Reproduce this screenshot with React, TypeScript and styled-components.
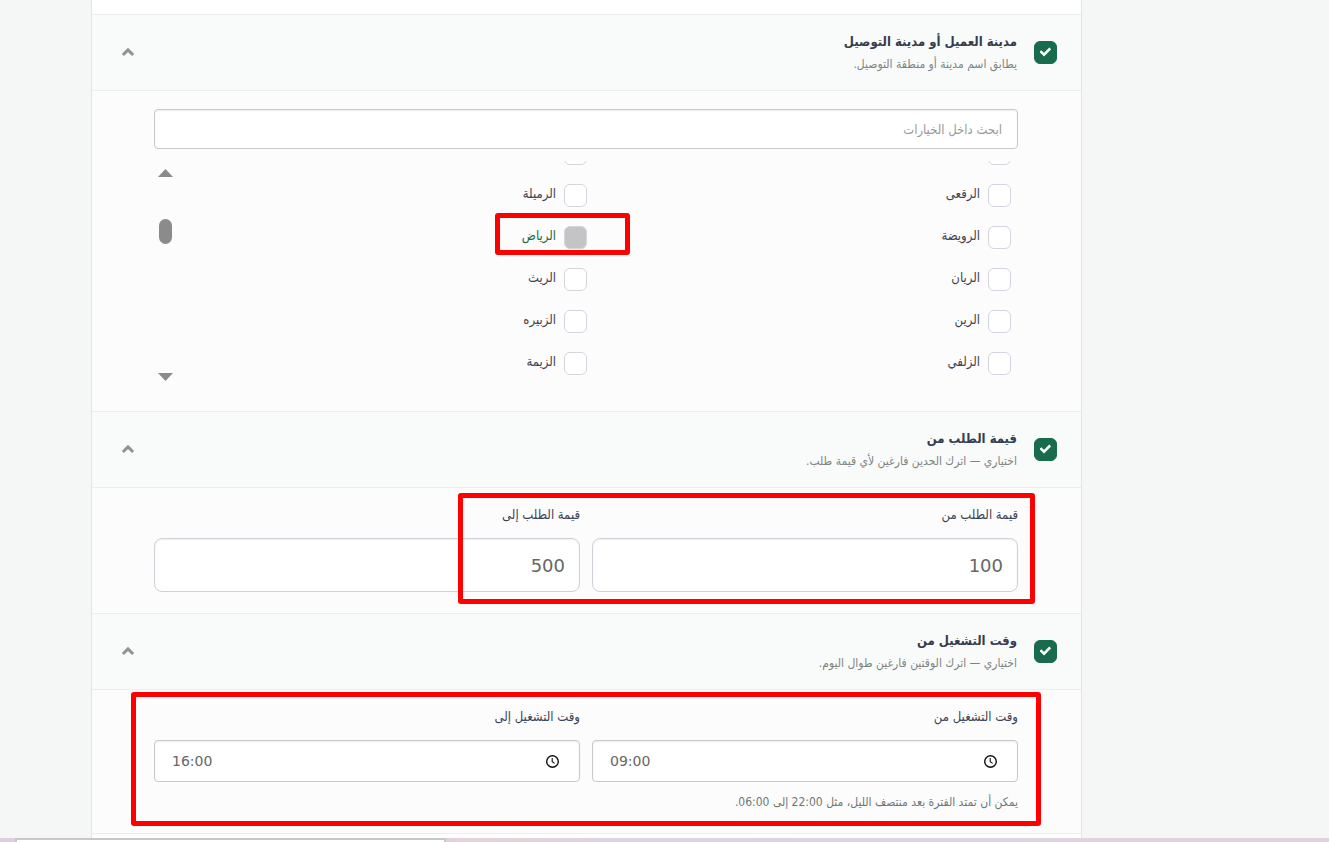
import React, { useState } from "react";
import styled, { createGlobalStyle } from "styled-components";

const GlobalStyle = createGlobalStyle`
  * { box-sizing: border-box; }
  body {
    margin: 0;
    background: #f4f7f6;
    color: #3d4455;
    font-family: "DejaVu Sans Condensed", "DejaVu Sans", sans-serif;
    font-size: 13px;
  }
  input, button { font-family: inherit; }
`;

const Screen = styled.div`
  display: flex;
  flex-direction: column;
  height: 100vh;
  overflow: hidden;
`;

const Page = styled.main`
  flex: 1;
  min-height: 0;
  overflow: hidden;
  padding-inline: 247px 91px;
`;

const Panel = styled.div`
  min-height: 100%;
  padding-top: 14px;
  background: #fff;
  border-inline: 1px solid #e0e6e4;
`;

const Section = styled.section`
  border-top: 1px solid #eaeeec;
`;

const Header = styled.header`
  display: flex;
  align-items: center;
  gap: 17px;
  height: 76px;
  padding-inline: 24px 29px;
  background: #f9fbfa;
  border-bottom: 1px solid #eaeeec;
`;

const Toggle = styled.label`
  display: flex;
  flex: 1;
  align-items: center;
  gap: 17px;
  cursor: pointer;
`;

const CheckFrame = styled.span`
  display: grid;
  flex: none;
  > * { grid-area: 1 / 1; }
  svg { pointer-events: none; margin: 6px; }
`;

const GreenCheck = styled.input`
  appearance: none;
  width: 23px;
  height: 23px;
  margin: 0;
  border: 1px solid #d3d6df;
  border-radius: 6px;
  background: #fff;
  &:checked { background: #186b4d; border-color: #186b4d; }
`;

const Titles = styled.span`
  display: flex;
  flex-direction: column;
  padding-bottom: 2px;
`;

const Title = styled.span`
  font-size: 13px;
  font-weight: 700;
  line-height: 24px;
  color: #363d4e;
`;

const Subtitle = styled.span`
  font-size: 12px;
  line-height: 20px;
  color: #7d8582;
`;

const Collapse = styled.button`
  display: flex;
  padding: 0 0 2px;
  border: 0;
  background: none;
  color: #8b9592;
`;

const Body = styled.div`
  position: relative;
  padding: 18px 63px 21px 62px;
  background: #fcfcfc;
`;

const field = `
  width: 100%;
  border: 1px solid #c9c9c9;
  border-radius: 4px;
  background: #fff;
  box-shadow: inset 0 1px 2px rgba(0, 0, 0, 0.07);
  color: #666;
  outline: none;
`;

const Search = styled.input`
  ${field}
  display: block;
  height: 40px;
  padding: 0 15px;
  font-size: 13px;
  &::placeholder { color: #999; opacity: 1; }
`;

const ListBox = styled.div`
  display: flex;
  height: 229px;
  margin-top: 12px;
  padding-inline-start: 7px;
  overflow: hidden;
`;

const Options = styled.div`
  flex: 1;
  display: grid;
  grid-template-columns: 1fr 1fr;
  grid-auto-rows: 42px;
  align-content: end;
  column-gap: 14px;
  padding-bottom: 6px;
`;

const Option = styled.div`
  position: relative;
  display: flex;
  align-items: center;
`;

const OptionLabel = styled.label<{ $active?: boolean }>`
  display: flex;
  align-items: center;
  gap: 8px;
  line-height: 20px;
  color: ${(p) => (p.$active ? "#186b4d" : "#3d4455")};
`;

const OptionCheck = styled.input`
  appearance: none;
  width: 23px;
  height: 23px;
  margin: 0;
  border: 1px solid #d3d6df;
  border-radius: 6px;
  background: #fff;
  &:checked { background: #c4c4c4; }
`;

const OptionName = styled.span`
  padding-bottom: 2px;
`;

const ScrollTrack = styled.div`
  display: flex;
  flex-direction: column;
  align-items: center;
  width: 23px;
  padding: 8px 0 9px;
`;

const ScrollArrow = styled.button`
  display: flex;
  padding: 0;
  border: 0;
  background: none;
`;

const ScrollThumb = styled.div`
  width: 13px;
  height: 25px;
  margin: 42px 0 auto;
  border-radius: 7px;
  background: #8b8b8b;
`;

const Fields = styled.div`
  display: grid;
  grid-template-columns: 1fr 1fr;
  gap: 12px;
`;

const Field = styled.div`
  display: flex;
  flex-direction: column;
  gap: 15px;
`;

const FieldLabel = styled.label`
  font-size: 13px;
  line-height: 17px;
`;

const Amount = styled.input`
  ${field}
  height: 54px;
  padding: 0 14px;
  border-color: #d0d0d9;
  border-radius: 8px;
  font-family: "DejaVu Sans", sans-serif;
  font-size: 18px;
`;

const TimeBox = styled.div`
  ${field}
  display: flex;
  align-items: center;
  direction: ltr;
  height: 42px;
  padding: 0 20px 0 17px;
`;

const TimeInput = styled.input`
  flex: 1;
  min-width: 0;
  padding: 0;
  border: 0;
  background: none;
  outline: none;
  color: #666;
  font-family: "DejaVu Sans", sans-serif;
  font-size: 14px;
`;

const ClockButton = styled.button`
  display: flex;
  padding: 0;
  border: 0;
  background: none;
  color: #111;
`;

const Note = styled.p`
  margin: 10px 0 0;
  font-size: 12px;
  line-height: 20px;
  color: #6f7774;
`;

const Highlight = styled.div<{ $inset: string }>`
  position: absolute;
  inset: ${(p) => p.$inset};
  border: 5px solid #fe0000;
  border-radius: 3px;
  pointer-events: none;
`;

const OptionHighlight = styled(Highlight)`
  width: 135px;
`;

const BottomBar = styled.footer`
  direction: ltr;
  flex: none;
  height: 4px;
  padding-left: 15px;
  background: linear-gradient(90deg, #dcd0df 0, #dcd0df 440px, #e5d3d8 460px, #ddd3e1 600px, #e0d3e0 100%);
`;

const BottomTab = styled.div`
  width: 431px;
  height: 4px;
  border: 2px solid #c8c8c8;
  border-bottom: 0;
  background: #fff;
`;

function Tick() {
  return (
    <svg width="11" height="10" viewBox="0 0 11 10" fill="none" stroke="#fff" strokeWidth="2.6">
      <path d="M0.4 4.2 4 7.6 10.2 1.4" />
    </svg>
  );
}

function Clock() {
  return (
    <svg width="14" height="14" viewBox="0 0 14 14" fill="none" stroke="currentColor">
      <circle cx="7.5" cy="7.5" r="5.8" strokeWidth="1.4" />
      <path d="M7.2 4V7.6L9.6 9.4" strokeWidth="1.1" />
    </svg>
  );
}

type ConditionProps = { id: string; title: string; subtitle: string; children: React.ReactNode };

function Condition({ id, title, subtitle, children }: ConditionProps) {
  const [on, setOn] = useState(true);
  return (
    <Section>
      <Header>
        <Toggle htmlFor={id}>
          <CheckFrame>
            <GreenCheck id={id} type="checkbox" checked={on} onChange={() => setOn(!on)} />
            {on && <Tick />}
          </CheckFrame>
          <Titles>
            <Title>{title}</Title>
            <Subtitle>{subtitle}</Subtitle>
          </Titles>
        </Toggle>
        <Collapse type="button" aria-label="طي القسم">
          <svg width="14" height="10" viewBox="0 0 14 10" fill="none" stroke="currentColor" strokeWidth="3">
            <path d="M1.9 8 7 2.9 12.1 8" />
          </svg>
        </Collapse>
      </Header>
      <Body>{children}</Body>
    </Section>
  );
}

const cities = [
  "", "", "الرقعى", "الرميلة", "الرويضة", "الرياض",
  "الريان", "الريث", "الرين", "الزبيره", "الزلفي", "الزيمة",
];

function TimeField({ id, label, value }: { id: string; label: string; value: string }) {
  return (
    <Field>
      <FieldLabel htmlFor={id}>{label}</FieldLabel>
      <TimeBox>
        <TimeInput id={id} defaultValue={value} />
        <ClockButton type="button" aria-label={label}><Clock /></ClockButton>
      </TimeBox>
    </Field>
  );
}

export default function App() {
  return (
    <Screen dir="rtl" lang="ar">
      <GlobalStyle />
      <Page>
        <Panel>
          <Condition id="city" title="مدينة العميل أو مدينة التوصيل" subtitle="يطابق اسم مدينة أو منطقة التوصيل.">
            <Search type="text" placeholder="ابحث داخل الخيارات" aria-label="ابحث داخل الخيارات" />
            <ListBox>
              <Options>
                {cities.map((name, i) => {
                  const active = name === "الرياض";
                  return (
                    <Option key={i}>
                      <OptionLabel $active={active}>
                        <OptionCheck type="checkbox" defaultChecked={active} />
                        <OptionName>{name}</OptionName>
                      </OptionLabel>
                      {active && <OptionHighlight $inset="-3px -43px 3px auto" />}
                    </Option>
                  );
                })}
              </Options>
              <ScrollTrack>
                <ScrollArrow type="button" aria-label="أعلى">
                  <svg width="15" height="8" viewBox="0 0 15 8" fill="#8b8b8b"><path d="M7.5 0 15 8H0z" /></svg>
                </ScrollArrow>
                <ScrollThumb />
                <ScrollArrow type="button" aria-label="أسفل">
                  <svg width="15" height="8" viewBox="0 0 15 8" fill="#8b8b8b"><path d="M7.5 8 15 0H0z" /></svg>
                </ScrollArrow>
              </ScrollTrack>
            </ListBox>
          </Condition>

          <Condition id="amount" title="قيمة الطلب من" subtitle="اختياري — اترك الحدين فارغين لأي قيمة طلب.">
            <Fields>
              <Field>
                <FieldLabel htmlFor="amount-from">قيمة الطلب من</FieldLabel>
                <Amount id="amount-from" inputMode="numeric" defaultValue="100" />
              </Field>
              <Field>
                <FieldLabel htmlFor="amount-to">قيمة الطلب إلى</FieldLabel>
                <Amount id="amount-to" inputMode="numeric" defaultValue="500" />
              </Field>
            </Fields>
            <Highlight $inset="5px 46px 9px 366px" />
          </Condition>

          <Condition id="hours" title="وقت التشغيل من" subtitle="اختياري — اترك الوقتين فارغين طوال اليوم.">
            <Fields>
              <TimeField id="time-from" label="وقت التشغيل من" value="09:00" />
              <TimeField id="time-to" label="وقت التشغيل إلى" value="16:00" />
            </Fields>
            <Note>يمكن أن تمتد الفترة بعد منتصف الليل، مثل 22:00 إلى 06:00.</Note>
            <Highlight $inset="2px 40px 7px 39px" />
          </Condition>
          <Section />
        </Panel>
      </Page>
      <BottomBar><BottomTab /></BottomBar>
    </Screen>
  );
}
